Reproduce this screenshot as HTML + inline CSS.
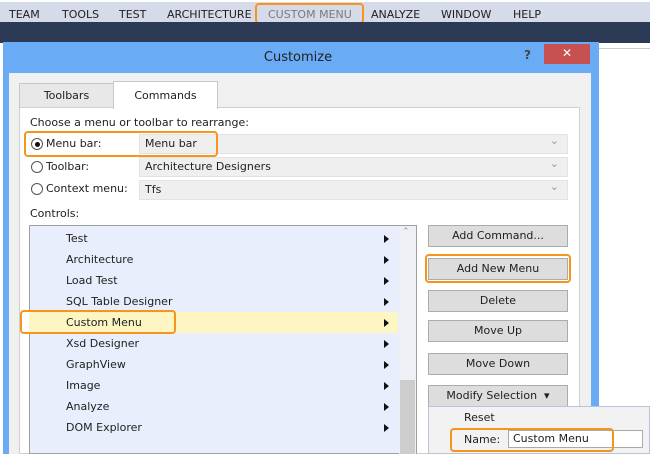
<!DOCTYPE html>
<html><head><style>
*{margin:0;padding:0;box-sizing:border-box}
body{width:650px;height:454px;overflow:hidden;background:#fff;font-family:"DejaVu Sans","Liberation Sans",sans-serif;font-size:11px;color:#1e1e1e;position:relative}
.a{position:absolute}
.menu span{position:absolute;top:8px;font-size:11px;color:#1e1e1e}
.btn{position:absolute;left:428px;width:140px;height:22px;background:#dddddd;border:1px solid #acacac;text-align:center;line-height:20px}
.row{position:absolute;left:29px;width:369px;height:21px;line-height:21px;padding-left:37px}
.row i{position:absolute;left:355px;top:7px;width:0;height:0;border-left:5px solid #111;border-top:4px solid transparent;border-bottom:4px solid transparent}
.org{position:absolute;border:2px solid #f7941d;border-radius:4px}
.combo{position:absolute;left:139px;width:429px;height:20px;background:#efefef;border:1px solid #e3e3e3;padding-left:5px;line-height:18px}
.combo:after{content:"⌄";position:absolute;right:8px;top:-3px;color:#999}
.rad{position:absolute;left:31px;width:12px;height:12px;border:1px solid #555;border-radius:50%;background:#fff}
</style></head><body>
<div class="a" style="left:0;top:2px;width:650px;height:20px;background:#d6dbe9"></div>
<div class="menu">
<span style="left:9px">TEAM</span><span style="left:62px">TOOLS</span><span style="left:119px">TEST</span><span style="left:167px">ARCHITECTURE</span><span style="left:268px;color:#7a7a7a">CUSTOM MENU</span><span style="left:371px">ANALYZE</span><span style="left:441px">WINDOW</span><span style="left:513px">HELP</span>
</div>
<div class="org" style="left:255px;top:3px;width:109px;height:21px"></div>
<div class="a" style="left:0;top:22px;width:650px;height:21px;background:#2d3a56"></div>
<div class="a" style="left:598px;top:48px;width:52px;height:406px;background:#fff;border-top:1px solid #ccc;border-left:1px solid #ccc"></div>
<div class="a" style="left:3px;top:42px;width:596px;height:412px;background:#69abf5"></div>
<div class="a" style="left:0;top:50px;width:300px;height:20px;text-align:center;width:596px;font-size:13px;color:#222">Customize</div>
<div class="a" style="left:524px;top:48px;font-size:12px;color:#444;font-weight:bold">?</div>
<div class="a" style="left:544px;top:44px;width:46px;height:20px;background:#c75050;color:#fff;text-align:center;line-height:19px;font-size:12px">✕</div>
<div class="a" style="left:9px;top:73px;width:582px;height:381px;background:#f0f0f0"></div>
<div class="a" style="left:19px;top:83px;width:95px;height:25px;background:#e8e8e8;border:1px solid #c8c8c8;text-align:center;line-height:23px">Toolbars</div>
<div class="a" style="left:19px;top:107px;width:561px;height:347px;background:#fff;border:1px solid #d0d0d0"></div>
<div class="a" style="left:113px;top:81px;width:105px;height:28px;background:#fff;border:1px solid #c8c8c8;border-bottom:none;text-align:center;line-height:28px">Commands</div>
<div class="a" style="left:30px;top:116px">Choose a menu or toolbar to rearrange:</div>
<div class="rad" style="top:138px"><div class="a" style="left:3px;top:3px;width:5px;height:5px;background:#111;border-radius:50%"></div></div>
<div class="a" style="left:46px;top:137px">Menu bar:</div>
<div class="combo" style="top:134px">Menu bar</div>
<div class="org" style="left:24px;top:131px;width:194px;height:26px"></div>
<div class="rad" style="top:161px"></div>
<div class="a" style="left:46px;top:160px">Toolbar:</div>
<div class="combo" style="top:157px">Architecture Designers</div>
<div class="rad" style="top:183px"></div>
<div class="a" style="left:46px;top:182px">Context menu:</div>
<div class="combo" style="top:180px">Tfs</div>
<div class="a" style="left:30px;top:207px">Controls:</div>
<div class="a" style="left:29px;top:225px;width:388px;height:229px;background:#e8eefc;border:1px solid #a0a0a0"></div>
<div class="a" style="left:399px;top:226px;width:17px;height:228px;background:#eef0f6"></div>
<div class="a" style="left:402px;top:227px;color:#999;font-size:9px">⌃</div>
<div class="a" style="left:400px;top:380px;width:15px;height:74px;background:#cdcdcd"></div>
<div class="row" style="top:228px">Test<i></i></div>
<div class="row" style="top:249px">Architecture<i></i></div>
<div class="row" style="top:270px">Load Test<i></i></div>
<div class="row" style="top:291px">SQL Table Designer<i></i></div>
<div class="row" style="top:312px;background:#fdf6c3">Custom Menu<i></i></div>
<div class="row" style="top:333px">Xsd Designer<i></i></div>
<div class="row" style="top:354px">GraphView<i></i></div>
<div class="row" style="top:375px">Image<i></i></div>
<div class="row" style="top:396px">Analyze<i></i></div>
<div class="row" style="top:417px">DOM Explorer<i></i></div>
<div class="org" style="left:20px;top:310px;width:156px;height:24px"></div>
<div class="btn" style="top:225px">Add Command...</div>
<div class="btn" style="top:258px">Add New Menu</div>
<div class="org" style="left:425px;top:254px;width:146px;height:29px"></div>
<div class="btn" style="top:290px">Delete</div>
<div class="btn" style="top:320px">Move Up</div>
<div class="btn" style="top:353px">Move Down</div>
<div class="btn" style="top:385px">Modify Selection &nbsp;▾</div>
<div class="a" style="left:428px;top:406px;width:222px;height:48px;background:#f2f2f2;border:1px solid #b8c4d8"></div>
<div class="a" style="left:464px;top:411px">Reset</div>
<div class="a" style="left:464px;top:433px">Name:</div>
<div class="a" style="left:508px;top:430px;width:135px;height:18px;background:#fff;border:1px solid #aaa;padding-left:4px;line-height:16px">Custom Menu</div>
<div class="org" style="left:450px;top:428px;width:164px;height:24px"></div>
</body></html>
